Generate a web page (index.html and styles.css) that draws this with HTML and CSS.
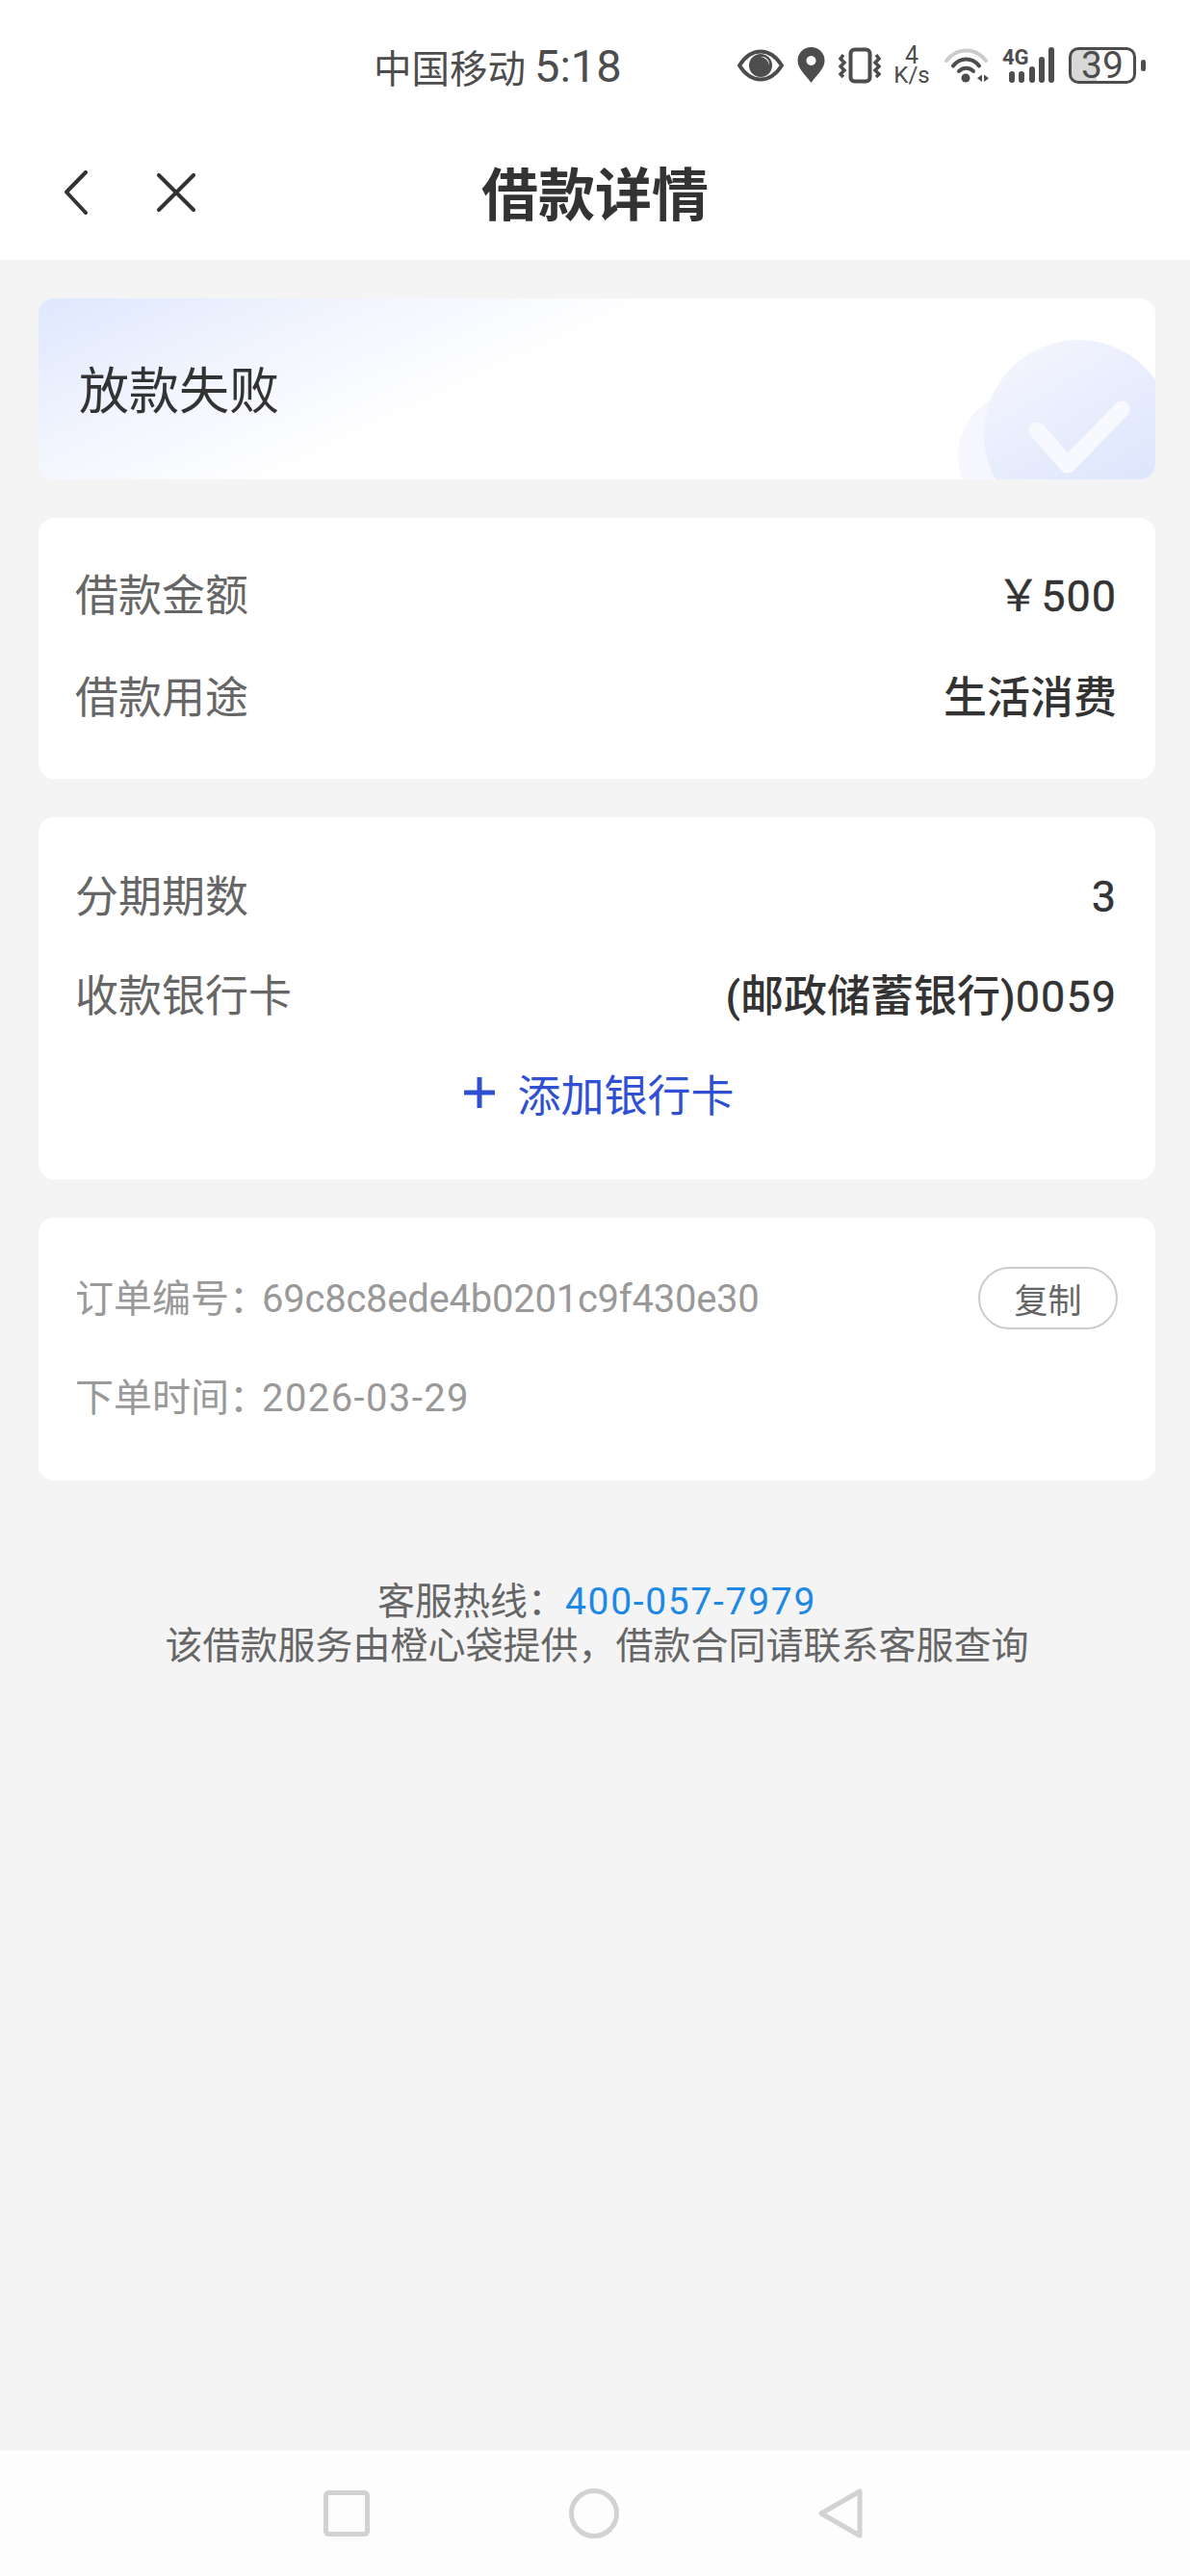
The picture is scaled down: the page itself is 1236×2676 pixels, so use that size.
FILE: index.html
```html
<!DOCTYPE html>
<html>
<head>
  <title>借款详情</title>
  <link rel="stylesheet" href="styles.css">
</head>
<body>

<div class="status-bar">
  <div class="carrier">中国移动</div>
  <div class="clock">5:18</div>
  <div class="status-icons">
    <svg width="48" height="40" viewBox="0 0 48 40">
      <path d="M2 20 C9 9 16 5.500 24 5.500 S39 9 46 20 C39 31 32 34.500 24 34.500 S9 31 2 20Z" fill="none" stroke="#4d4d4d" stroke-width="4"/>
      <circle cx="24" cy="20" r="12" fill="#4d4d4d"/>
      <path d="M24 11 a10 10 0 0 1 9 9 a8 8 0 0 0 -9 -9Z" fill="#fff"/>
    </svg>
    <svg width="29" height="40" viewBox="0 0 29 40">
      <path fill-rule="evenodd" fill="#4d4d4d" d="M14.500 38 C8 29 0.500 23 0.500 15 A14 14 0 0 1 28.500 15 C28.500 23 21 29 14.500 38Z M14.500 10 a5 5 0 1 0 0.010 0Z"/>
    </svg>
    <svg width="44" height="40" viewBox="0 0 44 40">
      <rect x="12.500" y="3.500" width="20" height="33" rx="4" fill="none" stroke="#4d4d4d" stroke-width="4"/>
      <path d="M5 9 L2 13 L6 17 L2 21 L6 25 L2 29 L5 32 M39 9 L42 13 L38 17 L42 21 L38 25 L42 29 L39 32" fill="none" stroke="#4d4d4d" stroke-width="3.500"/>
    </svg>
    <div class="net-speed">
      <span class="net-num">4</span>
      <span class="net-unit">K/s</span>
    </div>
    <svg width="47" height="40" viewBox="0 0 47 40">
      <path d="M3 15 C14 1 33 1 44 15" fill="none" stroke="#cccccc" stroke-width="4" stroke-linecap="round"/>
      <path d="M10 20.500 C17 11 30 11 37 20.500" fill="none" stroke="#4d4d4d" stroke-width="4" stroke-linecap="round"/>
      <path d="M16 26 C20 21.500 27 21.500 31 26" fill="none" stroke="#4d4d4d" stroke-width="4" stroke-linecap="round"/>
      <circle cx="23" cy="33" r="4.500" fill="#4d4d4d"/>
      <path d="M40 29.500 V37 L35 33.200Z M42 29.500 V37 L47 33.200Z" fill="#4d4d4d"/>
    </svg>
    <svg width="55" height="40" viewBox="0 0 55 40">
      <text x="0" y="19" class="signal-text">4G</text>
      <path d="M10 29 V35 M20 29 V35 M31 24 V35 M41 14 V35 M51 4 V35" stroke="#4d4d4d" stroke-width="6" stroke-linecap="round"/>
    </svg>
    <div class="battery">
      <div class="battery-body"><span class="battery-num">39</span></div>
      <div class="battery-nub"></div>
    </div>
  </div>
</div>

<div class="nav-bar">
  <svg class="nav-back" width="24" height="46" viewBox="0 0 24 46">
    <path d="M22 2 L2 22.500 L22 44" fill="none" stroke="#333" stroke-width="4" stroke-linecap="round" stroke-linejoin="round"/>
  </svg>
  <svg class="nav-close" width="40" height="40" viewBox="0 0 40 40">
    <path d="M2 2 L38 38 M38 2 L2 38" fill="none" stroke="#333" stroke-width="4" stroke-linecap="round"/>
  </svg>
  <div class="nav-title">借款详情</div>
</div>

<div class="content">
  <div class="card banner">
    <svg class="banner-art" width="205" height="188" viewBox="0 0 205 188">
      <defs>
        <linearGradient id="bigCircle" x1="0.2" y1="0" x2="0.8" y2="1">
          <stop offset="0" stop-color="#f4f5fe"/>
          <stop offset="1" stop-color="#d9e3fc"/>
        </linearGradient>
      </defs>
      <circle cx="67" cy="164" r="67" fill="#f5f6fe"/>
      <circle cx="125" cy="141" r="98" fill="url(#bigCircle)"/>
      <path d="M82 137 L114 173 L170 115" fill="none" stroke="#f8f9fe" stroke-width="17" stroke-linecap="round" stroke-linejoin="round"/>
    </svg>
    <div class="banner-text">放款失败</div>
  </div>

  <div class="card info-card first-info">
    <div class="row"><span class="row-label">借款金额</span><span class="row-value"><span class="num">￥500</span></span></div>
    <div class="row"><span class="row-label">借款用途</span><span class="row-value">生活消费</span></div>
  </div>

  <div class="card info-card second-info">
    <div class="row"><span class="row-label">分期期数</span><span class="row-value num-only"><span class="num">3</span></span></div>
    <div class="row"><span class="row-label">收款银行卡</span><span class="row-value">(邮政储蓄银行)<span class="num">0059</span></span></div>
    <div class="add-card">
      <svg width="34" height="34" viewBox="0 0 34 34">
        <path d="M17 1 V33 M1 17 H33" stroke="#3050d4" stroke-width="5"/>
      </svg>
      <span>添加银行卡</span>
    </div>
  </div>

  <div class="card order-card">
    <div class="order-row">
      <span class="order-text">订单编号：<span class="order-id">69c8c8ede4b0201c9f430e30</span></span>
      <div class="copy-btn">复制</div>
    </div>
    <div class="order-row">
      <span class="order-text">下单时间：<span class="order-date">2026-03-29</span></span>
    </div>
  </div>

  <div class="footer-note">
    <div>客服热线：<span class="hotline">400-057-7979</span></div>
    <div>该借款服务由橙心袋提供，借款合同请联系客服查询</div>
  </div>
</div>

<div class="system-nav">
  <svg width="48" height="48" viewBox="0 0 48 48">
    <rect x="2.500" y="2.500" width="43" height="43" rx="3" fill="none" stroke="#d2d2d2" stroke-width="5"/>
  </svg>
  <svg width="52" height="52" viewBox="0 0 52 52">
    <circle cx="26" cy="26" r="23.500" fill="none" stroke="#d2d2d2" stroke-width="5"/>
  </svg>
  <svg width="46" height="52" viewBox="0 0 46 52">
    <path d="M43 3 V49 L3 26Z" fill="none" stroke="#d2d2d2" stroke-width="5" stroke-linejoin="round"/>
  </svg>
</div>

</body>
</html>
```
FILE: styles.css
```css
body {
  margin: 0;
  height: 2676px;
  display: flex;
  flex-direction: column;
  background-color: #f4f4f4;
  font-family: "Roboto", "Noto Sans CJK SC", sans-serif;
  color: #333;
}

.status-bar {
  height: 130px;
  box-sizing: border-box;
  padding: 6px 46px 0 388px;
  display: flex;
  align-items: center;
  background-color: #fff;
  color: #4d4d4d;
}

.carrier {
  font-size: 39.500px;
  margin-right: 9px;
}

.clock {
  font-size: 47px;
  width: 92px;
}

.status-icons {
  margin-left: auto;
  display: flex;
  align-items: center;
}

.status-icons svg {
  margin-right: 14px;
}

.net-speed {
  width: 36px;
  margin-right: 15px;
  display: flex;
  flex-direction: column;
  align-items: center;
  line-height: 20px;
}

.net-num {
  font-size: 25px;
}

.net-unit {
  font-size: 24px;
}

.signal-text {
  font-size: 22px;
  font-weight: 700;
  fill: #4d4d4d;
}

.battery {
  display: flex;
  align-items: center;
}

.battery-body {
  width: 70px;
  height: 38px;
  box-sizing: border-box;
  border: 3px solid #4d4d4d;
  border-radius: 10px;
  background: linear-gradient(90deg, #d8d8d8 40%, #fff 40%);
  display: flex;
  align-items: center;
  justify-content: center;
}

.battery-num {
  font-size: 39px;
  line-height: 32px;
}

.battery-nub {
  width: 5px;
  height: 12px;
  margin-left: 5px;
  border-radius: 3px;
  background-color: #4d4d4d;
}

.nav-bar {
  height: 140px;
  position: relative;
  display: flex;
  align-items: center;
  background-color: #fff;
}

.nav-back {
  margin-left: 67px;
}

.nav-close {
  margin-left: 72px;
}

.nav-title {
  position: absolute;
  left: 0;
  right: 0;
  padding-bottom: 4px;
  text-align: center;
  font-size: 59px;
  font-weight: 700;
}

.content {
  flex: 1;
  padding: 40px 36px 0 40px;
  display: flex;
  flex-direction: column;
}

.card {
  background-color: #fff;
  border-radius: 16px;
  margin-bottom: 40px;
}

.banner {
  height: 188px;
  position: relative;
  overflow: hidden;
  display: flex;
  align-items: center;
  background: linear-gradient(155deg, #dee7fd 0%, #f2f5fe 22%, #fff 42%);
}

.banner-art {
  position: absolute;
  right: 0;
  bottom: 0;
}

.banner-text {
  position: relative;
  margin-left: 42px;
  padding-bottom: 4px;
  font-size: 52px;
}

.info-card {
  padding: 24px 40px 0 38px;
}

.first-info {
  height: 271px;
  box-sizing: border-box;
}

.second-info {
  height: 376px;
  box-sizing: border-box;
  padding-top: 28px;
}

.row {
  height: 106px;
  display: flex;
  align-items: center;
  justify-content: space-between;
  font-size: 45px;
}

.second-info .row {
  height: 103px;
}

.row-label {
  color: #666;
}

.row-value {
  font-weight: 500;
}

.num-only {
  margin-top: 6px;
}

.num {
  font-weight: 400;
  letter-spacing: 1px;
  -webkit-text-stroke: 0.4px #333;
}

.add-card {
  height: 104px;
  padding-left: 6px;
  display: flex;
  align-items: center;
  justify-content: center;
  gap: 22px;
  font-size: 45px;
  color: #3050d4;
}

.order-card {
  height: 273px;
  box-sizing: border-box;
  padding: 32px 39px 0 38px;
}

.order-row {
  height: 103px;
  display: flex;
  align-items: center;
  justify-content: space-between;
}

.order-text {
  margin-bottom: 6px;
  font-size: 40px;
  color: #999;
}

.order-id {
  margin-left: -6px;
  letter-spacing: -0.25px;
}

.order-date {
  margin-left: -6px;
  letter-spacing: 1.4px;
}

.copy-btn {
  width: 145px;
  height: 65px;
  box-sizing: border-box;
  border: 2px solid #ccc;
  border-radius: 33px;
  display: flex;
  align-items: center;
  justify-content: center;
  font-size: 35px;
  color: #666;
}

.footer-note {
  margin-top: 63px;
  text-align: center;
  font-size: 39px;
  line-height: 46px;
  color: #666;
}

.hotline {
  color: #1e88e5;
  letter-spacing: 1.7px;
}

.system-nav {
  height: 130px;
  display: flex;
  align-items: center;
  background-color: #fdfdfd;
  padding: 0 340px 0 336px;
  justify-content: space-between;
}
```
